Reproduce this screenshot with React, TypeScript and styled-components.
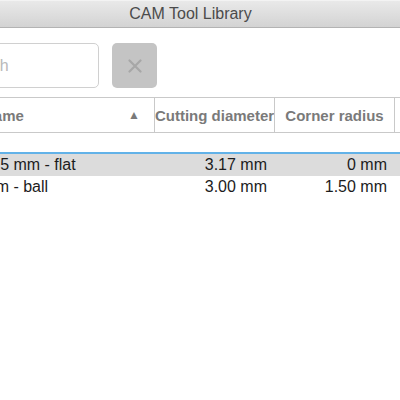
import React from "react";
import styled, { createGlobalStyle } from "styled-components";

const GlobalStyle = createGlobalStyle`
  html, body {
    margin: 0;
    padding: 0;
    background: #ffffff;
    overflow: hidden;
  }
  body {
    width: 400px;
    height: 400px;
    font-family: "Liberation Sans", Arial, Helvetica, sans-serif;
  }
`;

const Window = styled.div`
  width: 501px;
  margin-left: -60px;
  height: 400px;
  background: #ffffff;
  display: flex;
  flex-direction: column;
`;

const TitleBar = styled.div`
  flex: none;
  display: flex;
  align-items: center;
  justify-content: center;
  background: linear-gradient(#e9e9e9, #d3d3d3);
  border-top: 1px solid #f3f3f3;
  border-bottom: 1px solid #b3b3b3;
  box-sizing: border-box;
  height: 28px;
  font-size: 16px;
  color: #4b4b4b;
`;

const Toolbar = styled.div`
  display: flex;
  align-items: center;
  gap: 13px;
  padding: 15px 8px 9px;
`;

const SearchInput = styled.input`
  box-sizing: border-box;
  width: 151px;
  height: 45px;
  border: 1px solid #d0d0d0;
  border-radius: 5px;
  padding: 0 0 0 9px;
  font-family: inherit;
  font-size: 16px;
  color: #222;
  outline: none;
  &::placeholder {
    color: #b9b9b9;
  }
`;

const ClearButton = styled.button`
  width: 45px;
  height: 45px;
  border: none;
  border-radius: 5px;
  background: #c4c4c4;
  display: flex;
  align-items: center;
  justify-content: center;
  padding: 0;
`;

const columns = "215px 120px 120px 1fr";

const HeaderRow = styled.div`
  display: grid;
  grid-template-columns: ${columns};
  height: 36px;
  box-sizing: border-box;
  border-top: 1px solid #c9c9c9;
  border-bottom: 1px solid #c9c9c9;
`;

const HeaderCell = styled.div<{ $align?: "left" | "center" }>`
  display: flex;
  align-items: center;
  justify-content: ${(p) => (p.$align === "left" ? "space-between" : "center")};
  padding: ${(p) => (p.$align === "left" ? "0 14px 0 43px" : "0")};
  border-right: 1px solid #c9c9c9;
  font-size: 15px;
  font-weight: 700;
  color: #7a7a7a;
  white-space: nowrap;
  overflow: hidden;
  min-width: 0;
`;

const SortArrow = styled.span`
  font-size: 12px;
  color: #7a7a7a;
  margin-top: -1px;
`;

const Body = styled.div`
  padding-top: 19px;
`;

const RowList = styled.div`
  border-top: 2px solid #62b2e8;
`;

const Row = styled.div<{ $selected?: boolean }>`
  display: grid;
  grid-template-columns: ${columns};
  height: 22px;
  line-height: 22px;
  background: ${(p) => (p.$selected ? "#dcdcdc" : "transparent")};
  font-size: 16px;
  color: #1c1c1c;
`;

const Cell = styled.div<{ $align?: "left" | "right" }>`
  text-align: ${(p) => p.$align ?? "left"};
  padding: ${(p) => (p.$align === "right" ? "0 8px 0 0" : "0 0 0 29px")};
  white-space: nowrap;
  overflow: hidden;
`;

const tools = [
  { name: "3.175 mm - flat", diameter: "3.17 mm", radius: "0 mm" },
  { name: "3 mm - ball", diameter: "3.00 mm", radius: "1.50 mm" },
];

const CloseIcon = () => (
  <svg width="14" height="14" viewBox="0 0 14 14">
    <path d="M1.5 1.5 L12.5 12.5 M12.5 1.5 L1.5 12.5" stroke="#a7a7a7" strokeWidth="2.2" strokeLinecap="round" />
  </svg>
);

export default function App() {
  return (
    <>
      <GlobalStyle />
      <Window>
        <TitleBar>CAM Tool Library</TitleBar>
        <Toolbar>
          <SearchInput placeholder="Search" />
          <ClearButton aria-label="Clear">
            <CloseIcon />
          </ClearButton>
        </Toolbar>
        <HeaderRow>
          <HeaderCell $align="left">
            <span>Name</span>
            <SortArrow>▲</SortArrow>
          </HeaderCell>
          <HeaderCell>Cutting diameter</HeaderCell>
          <HeaderCell>Corner radius</HeaderCell>
          <HeaderCell />
        </HeaderRow>
        <Body>
          <RowList>
            {tools.map((t, i) => (
              <Row key={t.name} $selected={i === 0}>
                <Cell>{t.name}</Cell>
                <Cell $align="right">{t.diameter}</Cell>
                <Cell $align="right">{t.radius}</Cell>
                <Cell />
              </Row>
            ))}
          </RowList>
        </Body>
      </Window>
    </>
  );
}
